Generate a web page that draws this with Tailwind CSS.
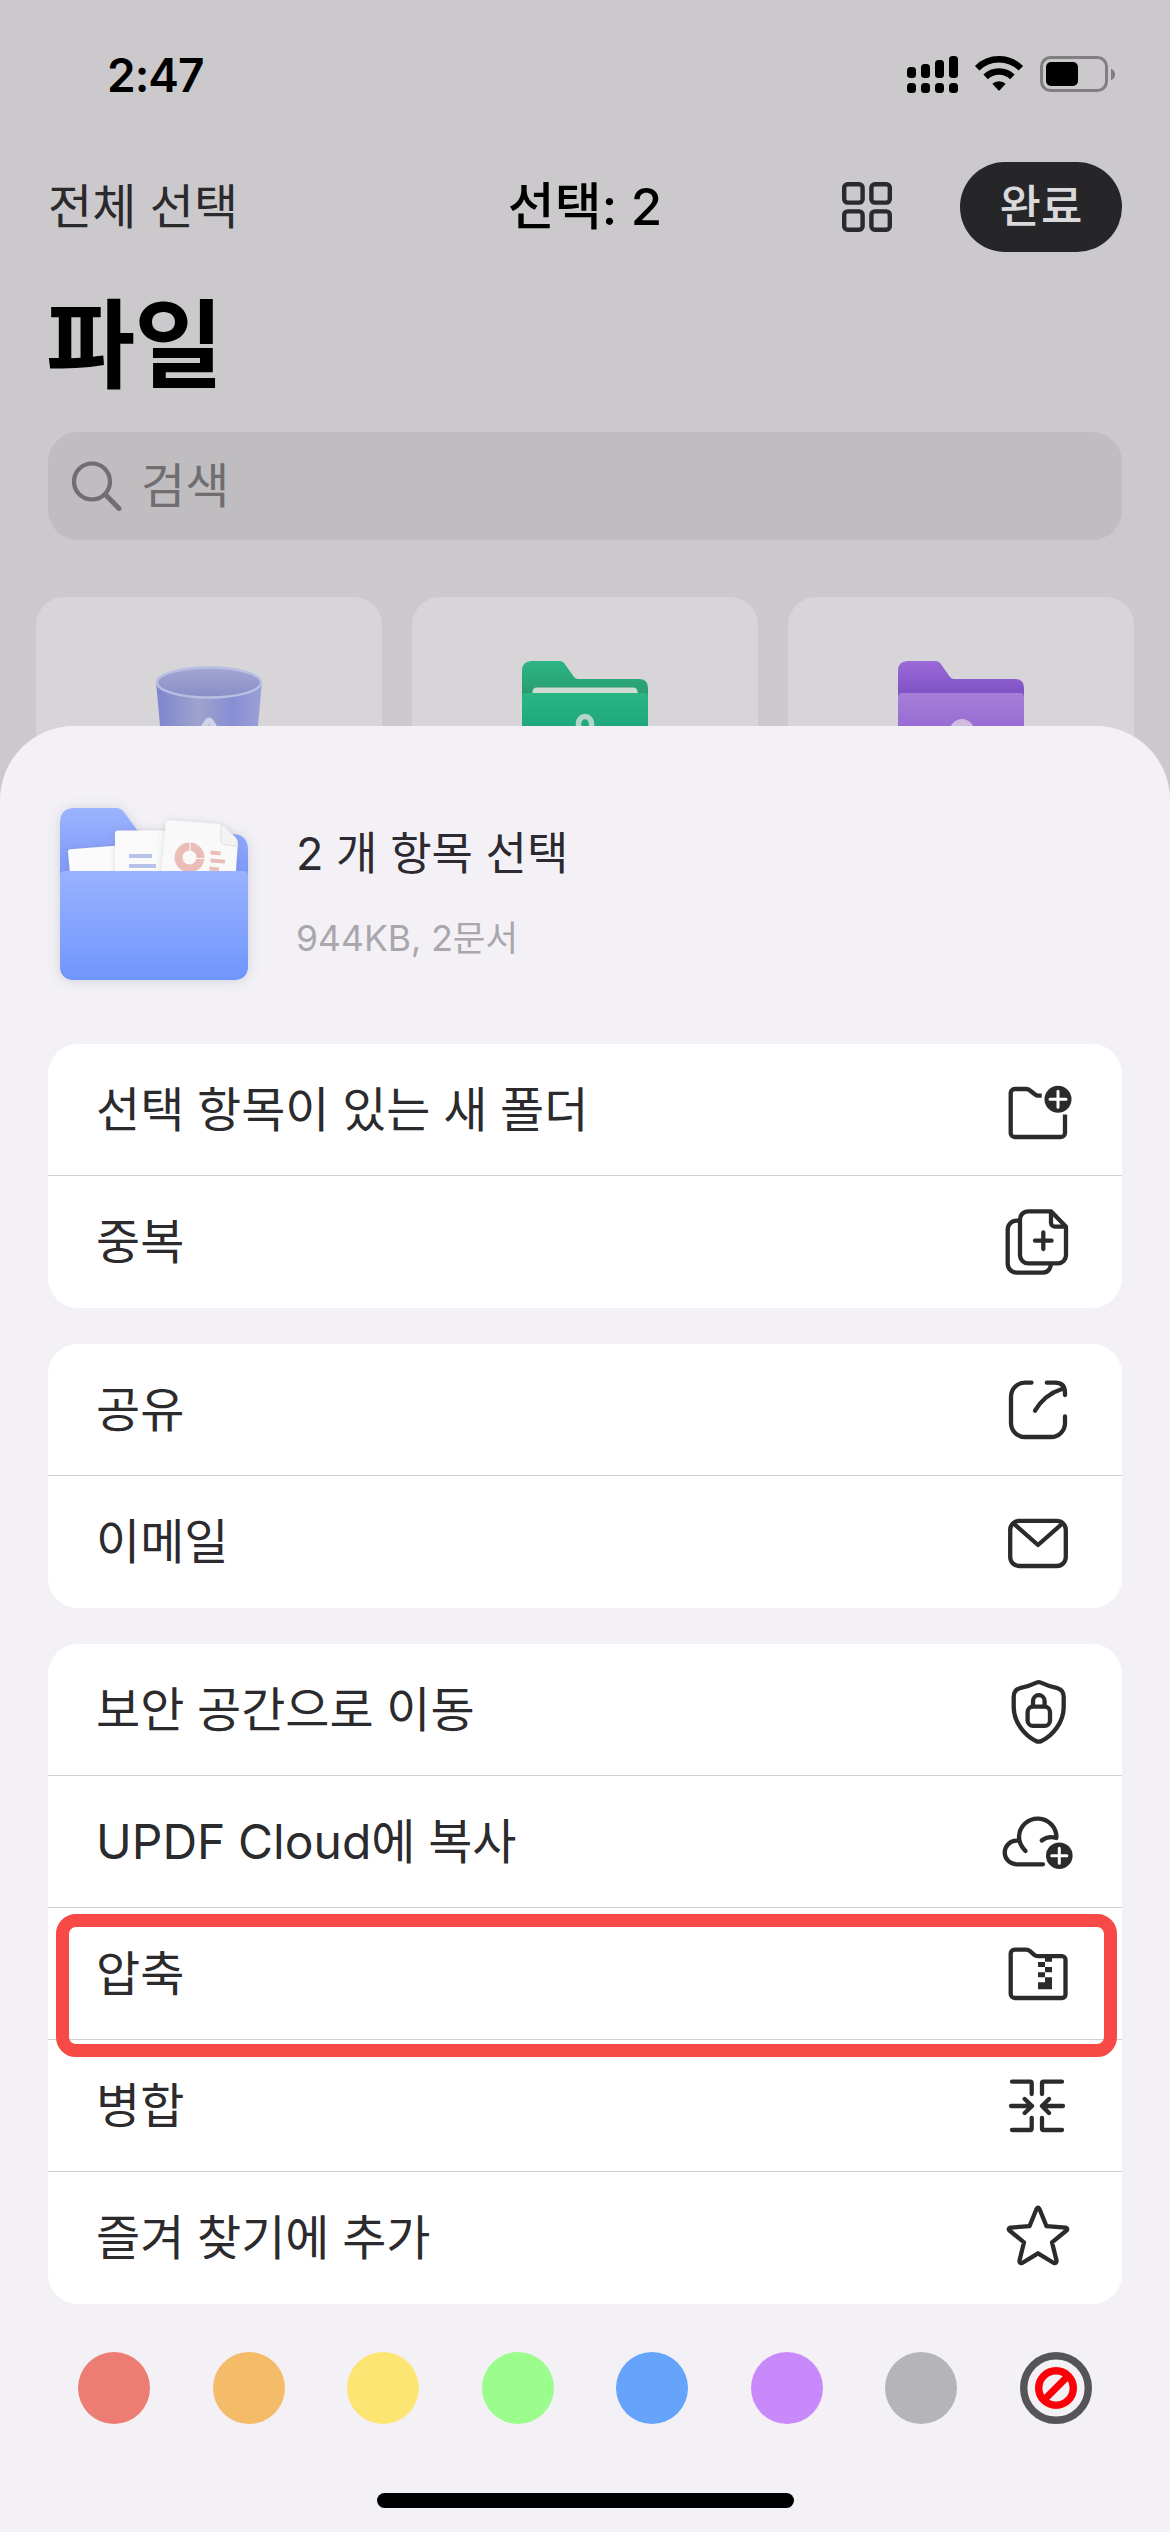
<!DOCTYPE html>
<html lang="ko">
<head>
<meta charset="utf-8">
<title>파일</title>
<script src="https://cdn.jsdelivr.net/npm/@tailwindcss/browser@4"></script>
</head>
<body class="bg-[#cbc9cc]">
<main class="flex h-[2532px] w-[1170px] flex-col overflow-hidden bg-[#cbc9cc] font-['Inter','Noto_Sans_CJK_KR',sans-serif] whitespace-nowrap">

  <section class="h-[800px] shrink-0 overflow-hidden">
    <!-- status bar -->
    <div class="flex h-[150px] items-center justify-between pr-[50px] pl-[107px]">
      <span class="text-[46px] leading-[60px] font-semibold tracking-[-1px] text-black">2:47</span>
      <svg class="h-[50px] w-[220px]" viewBox="900 50 220 50">
        <g>
          <rect x="907" y="67" width="9" height="11" rx="3.5"/><rect x="921" y="64" width="9" height="14" rx="3.5"/>
          <rect x="935" y="60" width="9" height="18" rx="3.5"/><rect x="949" y="56" width="9" height="22" rx="3.5"/>
          <rect x="907" y="83" width="9" height="10" rx="3.5"/><rect x="921" y="83" width="9" height="10" rx="3.5"/>
          <rect x="935" y="83" width="9" height="10" rx="3.5"/><rect x="949" y="83" width="9" height="10" rx="3.5"/>
        </g>
        <g fill="none" stroke="#000" stroke-width="6.4">
          <path d="M977.2 68.2a31 31 0 0 1 43.6 0"/>
          <path d="M985.6 76.9a19.3 19.3 0 0 1 26.8 0"/>
        </g>
        <path d="M992.3 83.8a10 10 0 0 1 13.4 0L999.7 90.3a1 1 0 0 1-1.4 0Z"/>
        <rect x="1041.5" y="57.5" width="65" height="33" rx="9" fill="none" stroke="#807e81" stroke-width="3"/>
        <rect x="1046" y="62" width="32" height="24" rx="5"/>
        <path d="M1111 68.7c5.4 2 5.4 9.600 0 11.600Z" fill="#807e81"/>
      </svg>
    </div>

    <!-- navigation bar -->
    <div class="grid h-[114px] grid-cols-3 items-center px-12">
      <span class="text-[48px] leading-[72px] text-[#2a292c]">전체 선택</span>
      <span class="text-center text-[51px] leading-[72px] font-medium text-black">선택: 2</span>
      <div class="flex items-center justify-end gap-[68px]">
        <svg class="size-[50px]" viewBox="0 0 50 50" fill="none" stroke="#2a292c" stroke-width="4.400">
          <rect x="2.200" y="2.200" width="18.400" height="18.400" rx="3.500"/><rect x="29.400" y="2.200" width="18.400" height="18.400" rx="3.500"/>
          <rect x="2.200" y="29.400" width="18.400" height="18.400" rx="3.500"/><rect x="29.400" y="29.400" width="18.400" height="18.400" rx="3.500"/>
        </svg>
        <button class="flex h-[90px] w-[162px] items-center justify-center rounded-full bg-[#262628] text-[45px] leading-[72px] font-medium text-[#d9d8da]">완료</button>
      </div>
    </div>

    <h1 class="h-[168px] pl-[46px] text-[97px] leading-[162px] font-bold tracking-[-1px] text-black">파일</h1>

    <div class="mx-12 flex h-[108px] items-center gap-[19px] rounded-[30px] bg-[#bfbdc0] pl-6">
      <svg class="size-[50px]" viewBox="0 0 50 50" fill="none" stroke="#706e71" stroke-width="4.200" stroke-linecap="round">
        <circle cx="20" cy="20.500" r="18"/><path d="M33.300 33.500 47 47.500" stroke-width="5"/>
      </svg>
      <span class="text-[48px] leading-[72px] text-[#706e71]">검색</span>
    </div>

    <!-- file tiles -->
    <div class="mt-[57px] grid grid-cols-3 gap-[30px] px-9">
      <div class="flex h-[300px] justify-center rounded-[28px] bg-[#d7d5d8] pt-[60px]">
        <svg class="h-[150px] w-[130px]" viewBox="144 657 130 150">
          <defs>
            <linearGradient id="bin" x1="0" x2="1"><stop offset="0" stop-color="#7f86cf"/><stop offset=".12" stop-color="#868dd0"/><stop offset=".4" stop-color="#9fa3cc"/><stop offset=".72" stop-color="#878ed4"/><stop offset="1" stop-color="#9ba1d6"/></linearGradient>
            <linearGradient id="binTop" x2="0" y2="1"><stop offset="0" stop-color="#a2a6d4"/><stop offset="1" stop-color="#898ec6"/></linearGradient>
          </defs>
          <path d="M156 682 166 790H252L262 682Z" fill="url(#bin)"/>
          <ellipse cx="209" cy="682.500" rx="52" ry="15" fill="url(#binTop)" stroke="#b9bfe2" stroke-width="2.400"/>
          <path d="M199 735 207 722q2-3 4 0l8 13" fill="none" stroke="#cfd3e6" stroke-width="6"/>
        </svg>
      </div>
      <div class="flex h-[300px] justify-center rounded-[28px] bg-[#d7d5d8] pt-[60px]">
        <svg class="h-[150px] w-[130px]" viewBox="520 657 130 150">
          <defs>
            <linearGradient id="gBack" x2="0" y2="1"><stop offset="0" stop-color="#2bb585"/><stop offset=".35" stop-color="#2b966a"/></linearGradient>
            <linearGradient id="gFront" x2="0" y2="1"><stop offset="0" stop-color="#2bb585"/><stop offset=".4" stop-color="#1da67a"/></linearGradient>
          </defs>
          <path d="M522 780V671q0-10 10-10h28q3 0 4.500 2.500L574 677q1.500 2 4 2h61q9 0 9 9v92Z" fill="url(#gBack)"/>
          <path d="M532.500 700v-8q0-4.500 4.500-4.500h96q4.500 0 4.500 4.500v8Z" fill="#cfdbd4"/>
          <path d="M522 790V697q0-4 4-4H644q4 0 4 4v93Z" fill="url(#gFront)"/>
          <path d="M578.500 738V723.500a6.500 7 0 0 1 13 0V738" fill="none" stroke="#b3d6c8" stroke-width="5.500"/>
        </svg>
      </div>
      <div class="flex h-[300px] justify-center rounded-[28px] bg-[#d7d5d8] pt-[60px]">
        <svg class="h-[150px] w-[130px]" viewBox="896 657 130 150">
          <defs>
            <linearGradient id="pBack" x2="0" y2="1"><stop offset="0" stop-color="#9a6ad6"/><stop offset=".3" stop-color="#7d50c4"/></linearGradient>
            <linearGradient id="pFront" x2="0" y2="1"><stop offset="0" stop-color="#a67ed8"/><stop offset=".4" stop-color="#9669d2"/></linearGradient>
          </defs>
          <path d="M898 780V671q0-10 10-10h28q3 0 4.500 2.500L950 677q1.500 2 4 2h61q9 0 9 9v92Z" fill="url(#pBack)"/>
          <path d="M898 790V697q0-4 4-4h118q4 0 4 4v93Z" fill="url(#pFront)"/>
          <circle cx="962" cy="731" r="12" fill="#cfbce0"/>
        </svg>
      </div>
    </div>
  </section>

  <!-- action sheet -->
  <section class="relative -mt-[74px] flex grow flex-col rounded-t-[74px] bg-[#f3f1f6]">
    <header class="flex h-[318px] items-start pt-[62px] pl-10">
      <svg class="h-[212px] w-[228px]" viewBox="40 788 228 212">
        <defs>
          <linearGradient id="bBack" x2="0" y2="1"><stop offset="0" stop-color="#9cb3fe"/><stop offset=".4" stop-color="#7c97f8"/></linearGradient>
          <linearGradient id="bFront" x2="0" y2="1"><stop offset="0" stop-color="#9ab2ff"/><stop offset="1" stop-color="#6f96fd"/></linearGradient>
          <filter id="soft" x="-20%" y="-20%" width="140%" height="140%"><feDropShadow dx="0" dy="1" stdDeviation="6" flood-color="#5a7080" flood-opacity=".25"/></filter>
          <filter id="page" x="-20%" y="-20%" width="140%" height="140%"><feDropShadow dx="0" dy="0" stdDeviation="3" flood-color="#606070" flood-opacity=".22"/></filter>
          <clipPath id="above"><path d="M40 788H268V874H40Z"/></clipPath>
        </defs>
        <path filter="url(#soft)" d="M60 965V823q0-15 15-15h41q5 0 8 4l13 18q4 4 9 4h86q16 0 16 16v115q0 15-15 15H75q-15 0-15-15Z" fill="url(#bBack)"/>
        <g clip-path="url(#above)">
          <path filter="url(#page)" d="M68 851.500q0-2 2-2.200L125 845v40H71Z" fill="#fbfbfc"/>
          <path filter="url(#page)" d="M115 833q0-2.500 2.500-2.500H175V885H115Z" fill="#fafafa"/>
          <path filter="url(#page)" d="M166 822.500q.3-2.500 3-2.300L219 824q3 .2 5 2.300L236 838q2 2.500 1.800 5.500L235 885H160Z" fill="#faf9f9"/>
          <path d="M221 824.500q3 .3 5 2.500l10 11.500q2 2.500 1.800 8L224 844.500q-3-.5-3-3.500Z" fill="#f4f3f4" stroke="#dfdee2" stroke-width="1"/>
          <path d="M129 856h23M129 866h27" stroke="#b8c1e6" stroke-width="4"/>
          <circle cx="189.500" cy="857.500" r="11" fill="none" stroke="#eabdb7" stroke-width="8"/>
          <path d="M190 842v12M193 858.500h12" stroke="#faf9f9" stroke-width="1.200"/>
          <path d="m210.500 852.500 10 .8M210.500 860.500l14.500 1.200M209.500 868.500l9.500 .8" stroke="#eabdb7" stroke-width="3.800"/>
        </g>
        <path d="M60 965V876q0-5 5-5H243q5 0 5 5v89q0 15-15 15H75q-15 0-15-15Z" fill="url(#bFront)"/>
      </svg>
      <div class="flex flex-col gap-[27px] pt-[33px] pl-7">
        <span class="text-[45px] leading-[66px] text-[#2c2a30]">2 개 항목 선택</span>
        <span class="text-[35.5px] leading-[50px] text-[#a9a7ac]">944KB, 2문서</span>
      </div>
    </header>

    <div class="flex flex-col gap-9 px-12 text-[48px] leading-[72px] text-[#2b2a2c] [word-spacing:-0.8px]">
      <div class="rounded-[30px] bg-white">
        <div class="flex h-[132px] items-center justify-between border-b border-[#d2d1d3] px-12 pt-px">
          <span>선택 항목이 있는 새 폴더</span>
          <svg class="size-[72px]" viewBox="0 0 72 72" fill="none" stroke="#2b2a2c" stroke-width="4.300">
            <path d="M39.700 21.700H36q-1.500 0-2.600-1L28 16.500Q26.200 15 24 15H12.700a4 4 0 0 0-4 4V59a4 4 0 0 0 4 4H59a4 4 0 0 0 4-4V40.500"/>
            <circle cx="56" cy="25.300" r="13.500" fill="#2b2a2c" stroke="none"/>
            <path d="M48 25.300H64M56 17.300V33.300" stroke="#fff" stroke-width="3" stroke-linecap="round"/>
          </svg>
        </div>
        <div class="flex h-[132px] items-center justify-between px-12">
          <span>중복</span>
          <svg class="size-[72px]" viewBox="0 0 72 72" fill="none" stroke="#2b2a2c" stroke-width="4.300" stroke-linejoin="round">
            <path d="M18 14.700H14.700a9 9 0 0 0-9 9V57.700a9 9 0 0 0 9 9H40.500q7 0 8.500-8"/>
            <path d="M49 5.300H26a8 8 0 0 0-8 8V49.300a8 8 0 0 0 8 8H56a8 8 0 0 0 8-8V20.700Z"/>
            <path d="M49 5.300V16.700a4 4 0 0 0 4 4H64"/>
            <path d="M33 34.700H49.600M41.300 26.400V43" stroke-linecap="round"/>
          </svg>
        </div>
      </div>

      <div class="rounded-[30px] bg-white">
        <div class="flex h-[132px] items-center justify-between border-b border-[#d2d1d3] px-12 pt-px">
          <span>공유</span>
          <svg class="size-[72px]" viewBox="0 0 72 72" fill="none" stroke="#2b2a2c" stroke-width="4.300" stroke-linecap="round">
            <path d="M29.500 8.700H23a14 14 0 0 0-14 14V49a14 14 0 0 0 14 14H49a14 14 0 0 0 14-14V42.500"/>
            <path d="M44.800 8.700H53q10 0 10 10V21"/>
            <path d="M33 36.700Q42.500 20.500 60 15"/>
          </svg>
        </div>
        <div class="flex h-[132px] items-center justify-between px-12">
          <span>이메일</span>
          <svg class="size-[72px]" viewBox="0 0 72 72" fill="none" stroke="#2b2a2c" stroke-width="4.300" stroke-linecap="round" stroke-linejoin="round">
            <rect x="8.200" y="14.800" width="55.600" height="45.200" rx="9"/>
            <path d="M11.500 17.500 36 39 60.500 17.500"/>
          </svg>
        </div>
      </div>

      <div class="relative rounded-[30px] bg-white">
        <div class="flex h-[132px] items-center justify-between border-b border-[#d2d1d3] px-12 pt-px">
          <span>보안 공간으로 이동</span>
          <svg class="size-[72px]" viewBox="0 0 72 72" fill="none" stroke="#2b2a2c" stroke-width="4.300" stroke-linejoin="round">
            <path d="M34.500 8.600Q36.700 7.600 38.900 8.600 46 12 55.500 14.200 61.700 16 61.700 23V33C61.700 48 51 61.500 39.500 67Q36.700 68.300 33.900 67C22.400 61.500 11.700 48 11.700 33V23Q11.700 16 17.900 14.200 27.500 12 34.500 8.600Z"/>
            <rect x="25.600" y="32.600" width="22.400" height="19.300" rx="5.500"/>
            <path d="M31 32.500V27a5.800 5.800 0 0 1 11.600 0V32.500"/>
          </svg>
        </div>
        <div class="flex h-[132px] items-center justify-between border-b border-[#d2d1d3] px-12 pt-px">
          <span>UPDF Cloud에 복사</span>
          <svg class="size-[72px]" viewBox="0 0 72 72" fill="none" stroke="#2b2a2c" stroke-width="4.300" stroke-linecap="round" stroke-linejoin="round">
            <path d="M23.500 45C19.500 41 17 36 17 30.500a18.700 18.700 0 0 1 37.400 1.500Q46 29.500 39.700 34.500"/>
            <path d="M16.500 34.700H14.500a11.800 11.800 0 0 0 0 23.600H41"/>
            <circle cx="57.300" cy="49.700" r="13.300" fill="#2b2a2c" stroke="none"/>
            <path d="M49.800 49.700H64.800M57.300 42.200V57.200" stroke="#fff" stroke-width="3"/>
          </svg>
        </div>
        <div class="flex h-[132px] items-center justify-between border-b border-[#d2d1d3] px-12 pt-px">
          <span>압축</span>
          <svg class="size-[72px]" viewBox="0 0 72 72" fill="none" stroke="#2b2a2c" stroke-width="4.300">
            <path d="M8.700 15.700a4 4 0 0 1 4-4H24Q26.200 11.700 28 13.200L32.500 17Q33.700 18.200 35.500 18.200H60a3.500 3.500 0 0 1 3.500 3.500V56.500a3.500 3.500 0 0 1-3.500 3.500H12.700a4 4 0 0 1-4-4Z"/>
            <path d="M43 18.700h7v5h-7ZM36 24h7v5h-7ZM43 29h7v5.200h-7ZM36 34.200h7v5h-7ZM43 39.200h7v5h-7ZM36 44.200h14v7.100H36Z" fill="#2b2a2c" stroke="none"/>
          </svg>
        </div>
        <div class="flex h-[132px] items-center justify-between border-b border-[#d2d1d3] px-12 pt-px">
          <span>병합</span>
          <svg class="size-[72px]" viewBox="0 0 72 72" fill="none" stroke="#2b2a2c" stroke-width="4.300" stroke-linecap="round" stroke-linejoin="round">
            <path d="M10 11.700H28.200q1.500 0 1.500 1.500V24M29.700 48V58.500q0 1.500-1.500 1.500H10M60 11.700H41.500q-1.500 0-1.500 1.500V24M40 48V58.500q0 1.500 1.500 1.500H60"/>
            <path d="M9 36H30M22.700 29 30 36 22.700 43M61 36H40M47 29 40 36 47 43"/>
          </svg>
        </div>
        <div class="flex h-[132px] items-center justify-between px-12">
          <span>즐겨 찾기에 추가</span>
          <svg class="size-[72px]" viewBox="0 0 72 72" fill="none" stroke="#2b2a2c" stroke-width="4.300" stroke-linejoin="round">
            <path d="M34.500 7Q36 4.500 37.500 7L44.500 24.200 63.500 25.600Q66.300 26.500 64.500 28.500L50 40.300 54.500 58.500Q54.700 61.800 51.800 61L36 51.300 20.200 61Q17.300 61.800 17.500 58.500L22 40.300 7.500 28.500Q5.700 26.500 8.500 25.600L27.500 24.200Z"/>
          </svg>
        </div>
        <!-- highlight around the compress row -->
        <div class="absolute top-[270px] left-2 h-[143px] w-[1061px] rounded-[20px] border-[13px] border-[#f74a47]"></div>
      </div>
    </div>

    <!-- colour tags -->
    <div class="mt-12 flex justify-between px-[78px]">
      <span class="size-[72px] rounded-full bg-[#ed7c72]"></span>
      <span class="size-[72px] rounded-full bg-[#f4bc68]"></span>
      <span class="size-[72px] rounded-full bg-[#fde574]"></span>
      <span class="size-[72px] rounded-full bg-[#9bfd8b]"></span>
      <span class="size-[72px] rounded-full bg-[#66a3fb]"></span>
      <span class="size-[72px] rounded-full bg-[#c889fb]"></span>
      <span class="size-[72px] rounded-full bg-[#b5b4b8]"></span>
      <svg class="size-[72px]" viewBox="0 0 72 72" fill="none">
        <circle cx="36" cy="36" r="32.300" stroke="#555456" stroke-width="7.400"/>
        <circle cx="36" cy="36" r="17.300" stroke="#fb0007" stroke-width="7.400"/>
        <path d="M25.500 46.500 46.500 25.500" stroke="#fb0007" stroke-width="7"/>
      </svg>
    </div>
    <div class="mx-auto mt-[69px] h-[15px] w-[417px] rounded-full bg-black"></div>
  </section>
</main>
</body>
</html>
